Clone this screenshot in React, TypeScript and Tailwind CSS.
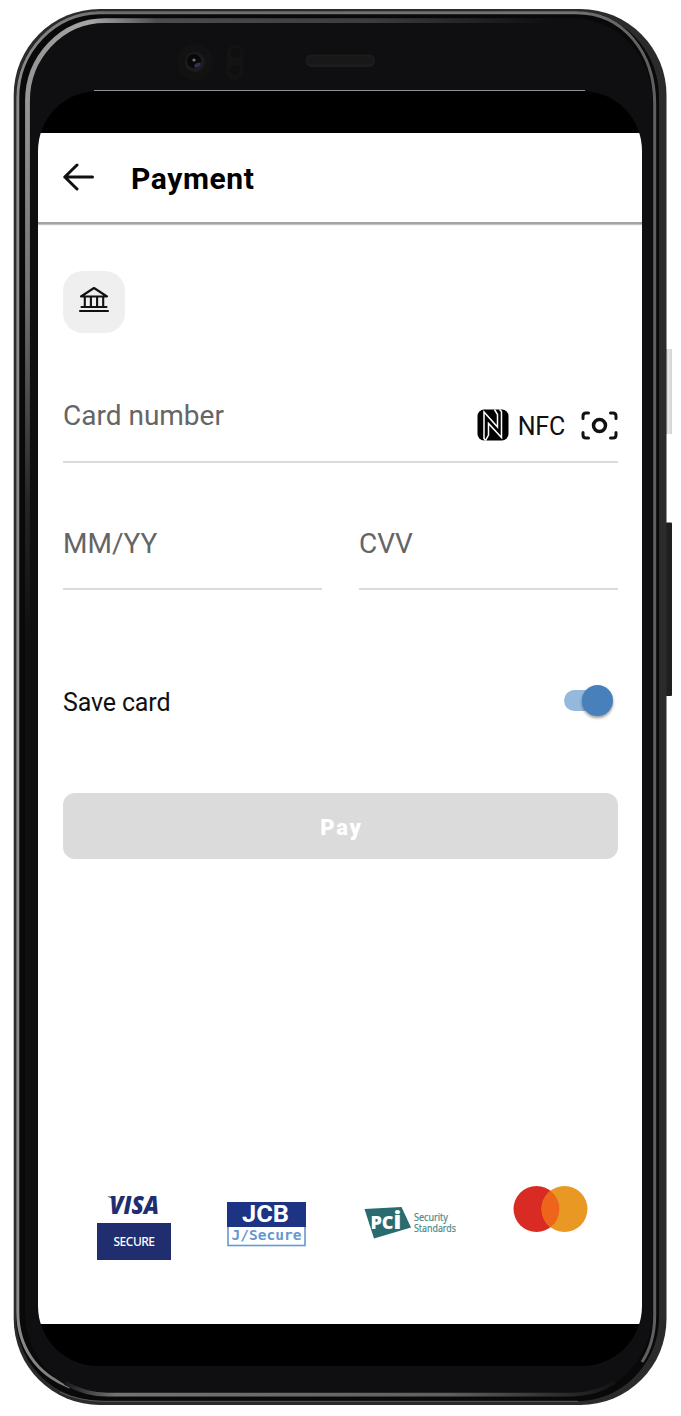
import React from 'react';

function PhoneFrame() {
  return (
    <svg className="absolute inset-0" width="681" height="1416" viewBox="0 0 681 1416" aria-hidden="true">
      <defs>
        <linearGradient id="rim" gradientUnits="userSpaceOnUse" x1="14" y1="0" x2="666" y2="0">
          <stop offset="0" stopColor="#8c8c8c" />
          <stop offset="0.15" stopColor="#6c6c6c" />
          <stop offset="0.85" stopColor="#747474" />
          <stop offset="1" stopColor="#5c5c5c" />
        </linearGradient>
        <linearGradient id="lip" gradientUnits="userSpaceOnUse" x1="14" y1="0" x2="666" y2="0">
          <stop offset="0" stopColor="#929292" />
          <stop offset="0.12" stopColor="#a6a6a6" />
          <stop offset="0.22" stopColor="#4c4c4c" />
          <stop offset="0.55" stopColor="#3c3c3c" />
          <stop offset="0.82" stopColor="#0f0f11" />
        </linearGradient>
        <linearGradient id="leftLip" gradientUnits="userSpaceOnUse" x1="0" y1="100" x2="0" y2="640">
          <stop offset="0" stopColor="#959595" />
          <stop offset="0.35" stopColor="#747474" />
          <stop offset="0.75" stopColor="#242424" />
          <stop offset="1" stopColor="#0f0f11" />
        </linearGradient>
        <linearGradient id="bottomLip" gradientUnits="userSpaceOnUse" x1="60" y1="0" x2="615" y2="0">
          <stop offset="0" stopColor="#101012" />
          <stop offset="0.1" stopColor="#747474" />
          <stop offset="0.7" stopColor="#606060" />
          <stop offset="1" stopColor="#141414" />
        </linearGradient>
        <linearGradient id="key" x1="0" y1="0" x2="1" y2="0">
          <stop offset="0" stopColor="#b5b5b5" />
          <stop offset="0.5" stopColor="#e4e4e4" />
          <stop offset="1" stopColor="#d2d2d2" />
        </linearGradient>
      </defs>
      <rect x="665" y="349" width="7" height="85" fill="url(#key)" />
      <rect x="665" y="522.500" width="7" height="173.500" rx="1" fill="#1f1f1f" />
      <rect x="13.700" y="9" width="652.800" height="1396" rx="86" fill="#2b2b2b" />
      <path d="M99.500 11.500H576C622 11.500 659 50 659 97V1318C659 1362 623 1401 578 1401H102C52 1401 16 1362 16 1316V98C16 51 53 11.500 99.500 11.500Z" fill="#090909" />
      <path d="M60 1392Q80 1401.300 104 1401.300H578" fill="none" stroke="#5a5a5a" strokeWidth="1" />
      <path d="M70 1387C35 1374 17.800 1345 17.800 1312V98C17.800 51 55 12.700 99.500 12.700H576C623 12.700 654.700 52 654.700 104V1315C654.700 1335 650 1350 642 1362" fill="none" stroke="url(#rim)" strokeWidth="3" />
      <path d="M105 18H570C618 18 652.500 55 652.500 104V1312C652.500 1360 615 1397 568 1397H110C62 1397 25 1360 25 1312V102C25 55 60 18 105 18Z" fill="#0f0f11" />
      <path d="M27.500 101C27.500 58 61 20.700 105 20.700H570" fill="none" stroke="url(#lip)" strokeWidth="4.800" />
      <rect x="25.100" y="100" width="4.800" height="540" fill="url(#leftLip)" />
      <path d="M65 1383Q85 1394.700 108 1394.700H572Q597 1394 615 1382" fill="none" stroke="url(#bottomLip)" strokeWidth="3.800" />
      <circle cx="195" cy="62" r="18" fill="#121212" />
      <circle cx="195" cy="62" r="10" fill="#1c1c1e" />
      <circle cx="194" cy="61" r="7" fill="#08080a" />
      <ellipse cx="197.500" cy="65" rx="3.500" ry="2" fill="#30334f" transform="rotate(-30 197.500 65)" />
      <circle cx="194" cy="60" r="1.600" fill="#777" />
      <rect x="226.500" y="45" width="16.500" height="35" rx="8" fill="#131313" />
      <circle cx="236" cy="53" r="5" fill="#0f0f0f" />
      <circle cx="235" cy="70" r="5" fill="#0f0f0f" />
      <rect x="305.500" y="54.500" width="69.500" height="12.500" rx="6" fill="#1c1c1c" />
      <rect x="307" y="56.500" width="66" height="8" rx="4" fill="#181818" />
      <path d="M94 90.500H585" stroke="#929295" />
    </svg>
  );
}

function Header() {
  return (
    <header className="flex h-[91px] shrink-0 items-center border-b-2 border-[#a3a3a3] pl-[25px] shadow-[0_1px_1px_#c4c4c4]">
      <svg className="mb-[2px]" width="32" height="28" viewBox="0 0 32 28" fill="none" stroke="#111" strokeWidth="3" strokeLinecap="round" strokeLinejoin="round" aria-label="Back">
        <path d="M29.500 14H1.800M14 2L1.800 14L14 26" />
      </svg>
      <h1 className="ml-[36px] pt-[3px] text-[30px] leading-9 font-bold tracking-[0.6px] text-black">Payment</h1>
    </header>
  );
}

function NfcIcon() {
  return (
    <svg width="32" height="32" viewBox="0 0 32 32" aria-hidden="true">
      <rect x="0.500" y="0.500" width="31" height="31" rx="6.500" fill="#000" />
      <path d="M8.500 31.500L7 29.500V3L20.500 18V5.500L17.500 0.500M22.500 0.500L24.500 2.500V28.500L11.500 14.500V26L8.500 31.500" fill="none" stroke="#fff" strokeWidth="1.500" />
    </svg>
  );
}

function ScanIcon() {
  return (
    <svg width="37" height="29" viewBox="0 0 37 29" fill="none" stroke="#111" strokeWidth="3" strokeLinecap="round" aria-label="Scan card">
      <path d="M7.500 2H5Q2 2 2 5V7.500M29.500 2H32Q35 2 35 5V7.500M2 21.500V24Q2 27 5 27H7.500M35 21.500V24Q35 27 32 27H29.500" />
      <circle cx="18.500" cy="14.500" r="6" strokeWidth="3.500" />
    </svg>
  );
}

function VisaSecure() {
  return (
    <div className="mt-[10px] flex w-[74px] flex-col items-center">
      <svg width="74" height="27" viewBox="0 0 74 27" overflow="visible">
        <path d="M10 0.500H18L17 4L14 2Z" fill="#202e70" />
        <text x="12.500" y="17.500" textLength="49.500" lengthAdjust="spacingAndGlyphs" fontFamily="Open Sans, sans-serif" fontSize="24" fontWeight="800" fontStyle="italic" fill="#202e70">VISA</text>
      </svg>
      <div className="flex h-[37px] w-[74px] items-center justify-center bg-[#202e70] font-['Noto_Sans',sans-serif] text-[12px] font-medium tracking-[-0.5px] text-white">SECURE</div>
    </div>
  );
}

function JcbSecure() {
  return (
    <svg className="mt-[16px]" width="79" height="45" viewBox="0 0 79 45" overflow="visible">
      <rect x="1" y="1" width="77" height="42.500" fill="#fff" stroke="#6798d0" strokeWidth="1.600" />
      <rect width="79" height="25" fill="#1d3383" />
      <text x="15" y="20" textLength="47" lengthAdjust="spacingAndGlyphs" fontFamily="Roboto, sans-serif" fontSize="24.500" fontWeight="700" fill="#fff">JCB</text>
      <text x="4.500" y="38" textLength="70" lengthAdjust="spacingAndGlyphs" fontFamily="DejaVu Sans Mono, monospace" fontSize="14.500" fontWeight="700" fill="#6798d0">J/Secure</text>
    </svg>
  );
}

function PciStandards() {
  return (
    <svg className="mt-[20px]" width="94" height="34" viewBox="0 0 94 34" overflow="visible">
      <path d="M0.500 3L37.500 1L47 21.500L10 32.500Z" fill="#286c70" />
      <text x="6.500" y="23" fontFamily="Open Sans, sans-serif" fontSize="18" fontWeight="800" fill="#fff">PC<tspan fontSize="24">i</tspan></text>
      <g fontFamily="Noto Sans, sans-serif" fill="#4b8a8c" stroke="#4b8a8c" strokeWidth="0.200">
        <text x="50" y="15" fontSize="10.300" textLength="34" lengthAdjust="spacingAndGlyphs">Security</text>
        <text x="50" y="25.500" fontSize="10.300" textLength="42" lengthAdjust="spacingAndGlyphs">Standards</text>
      </g>
    </svg>
  );
}

function Mastercard() {
  return (
    <svg width="75" height="48" viewBox="0 0 75 48" aria-label="Mastercard">
      <circle cx="23.500" cy="23" r="23" fill="#d92b24" />
      <circle cx="51.500" cy="23" r="23" fill="#e99923" />
      <path d="M37.500 4.800A23 23 0 0 1 37.500 41.200A23 23 0 0 1 37.500 4.800Z" fill="#ee641b" />
    </svg>
  );
}

export default function App() {
  return (
    <div className="relative h-[1416px] w-[681px] overflow-hidden bg-white pt-[91px] pl-[38px] font-['Roboto',sans-serif]">
      <PhoneFrame />
      <main className="relative h-[1275px] w-[604px] overflow-hidden rounded-[60px] bg-black pt-[42px]">
        <div className="flex h-[1191px] flex-col bg-white">
          <Header />
          <div className="flex flex-col pt-[47px] pr-[24px] pl-[25px]">
            <div className="flex size-[62px] items-center justify-center rounded-[20px] bg-[#efefef]">
              <svg className="mb-[6px]" width="32" height="28" viewBox="0 0 32 28" fill="none" stroke="#111" strokeWidth="2.100" strokeLinecap="round" strokeLinejoin="round">
                <path d="M3 11.500L16 3L29 11.500ZM3.500 22H28.500M6.800 12V21.500M12.900 12V21.500M19.100 12V21.500M25.200 12V21.500M2 26H30" />
              </svg>
            </div>
            <div className="mt-[48px] flex h-[82px] items-start justify-between border-b-2 border-[#dbdbdb]">
              <span className="pt-[17px] text-[28px] leading-9 text-[#656565]">Card number</span>
              <div className="mt-[26px] flex items-center">
                <NfcIcon />
                <span className="mr-[1px] ml-[9px] pt-[4px] text-[25px] leading-8 tracking-[-0.2px] text-[#111]">NFC</span>
                <div className="ml-[15px] pt-[1px]"><ScanIcon /></div>
              </div>
            </div>
            <div className="grid grid-cols-2 gap-[37px]">
              <div className="h-[127px] border-b-2 border-[#dbdbdb] pt-[63px] text-[28px] leading-9 text-[#656565]">MM/YY</div>
              <div className="h-[127px] border-b-2 border-[#dbdbdb] pt-[63px] text-[28px] leading-9 text-[#656565]">CVV</div>
            </div>
            <div className="mt-[90px] flex h-10 items-center justify-between pr-[5px]">
              <span className="pt-[6px] text-[25px] leading-8 tracking-[-0.15px] text-[#111]">Save card</span>
              <div className="relative h-[21px] w-[49px]">
                <div className="h-[21px] w-[44px] rounded-full bg-[#94b9dc]" />
                <div className="absolute -top-[5px] right-0 size-[31px] rounded-full bg-[#4780ba] shadow-[0_2px_3px_rgba(0,0,0,0.4)]" />
              </div>
            </div>
            <button className="mt-[73px] h-[66px] rounded-[12px] bg-[#dbdbdb] pt-[2px] pl-[2px] text-[22px] font-black tracking-[1.8px] text-white">Pay</button>
            <footer className="mt-[327px] flex items-start pl-[34px]">
              <VisaSecure />
              <div className="ml-[56px]"><JcbSecure /></div>
              <div className="ml-[58px]"><PciStandards /></div>
              <div className="ml-[55px]"><Mastercard /></div>
            </footer>
          </div>
        </div>
      </main>
    </div>
  );
}
